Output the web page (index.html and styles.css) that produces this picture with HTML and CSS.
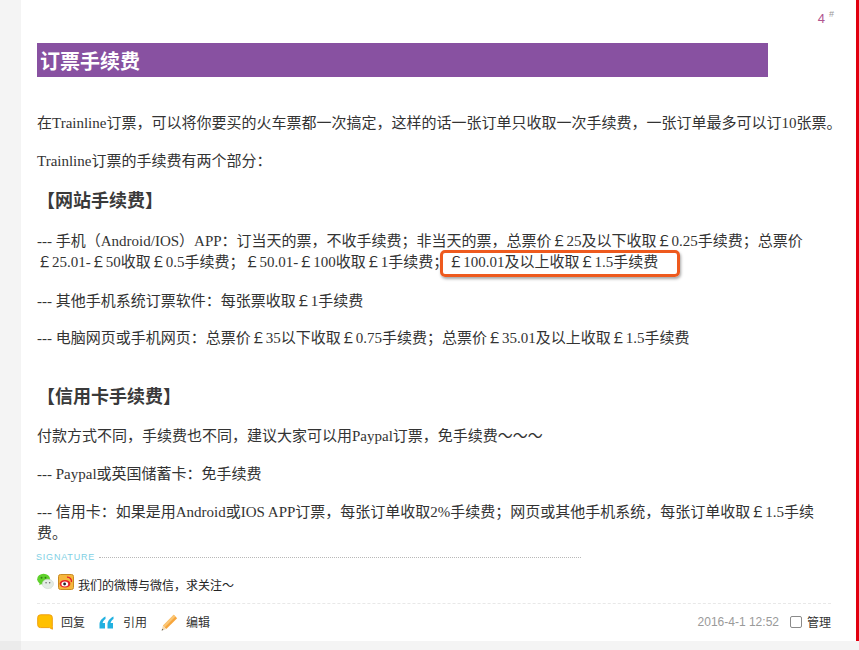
FILE: index.html
```html
<!DOCTYPE html>
<html lang="zh">
<head>
<meta charset="utf-8">
<title>订票手续费</title>
<link rel="stylesheet" href="styles.css">
</head>
<body>
<div class="page">
  <aside class="gutter"></aside>
  <main class="post">
    <div class="floor"><span class="floor-num">4</span><sup class="floor-mark">#</sup></div>
    <h1 class="title">订票手续费</h1>
    <div class="content">
      <p class="p-first">在Trainline订票，可以将你要买的火车票都一次搞定，这样的话一张订单只收取一次手续费，一张订单最多可以订10张票。</p>
      <p class="p-second">Trainline订票的手续费有两个部分：</p>
      <h2 class="section">【网站手续费】</h2>
      <p class="p-mobile">--- 手机（Android/IOS）APP：订当天的票，不收手续费；非当天的票，总票价￡25及以下收取￡0.25手续费；总票价￡25.01-￡50收取￡0.5手续费；￡50.01-￡100收取￡1手续费；￡100.01及以上收取￡1.5手续费<span class="callout"></span></p>
      <p class="p-other">--- 其他手机系统订票软件：每张票收取￡1手续费</p>
      <p class="p-web">--- 电脑网页或手机网页：总票价￡35以下收取￡0.75手续费；总票价￡35.01及以上收取￡1.5手续费</p>
      <h2 class="section section-card">【信用卡手续费】</h2>
      <p class="p-pay">付款方式不同，手续费也不同，建议大家可以用Paypal订票，免手续费～～～</p>
      <p class="p-paypal">--- Paypal或英国储蓄卡：免手续费</p>
      <p class="p-card">--- 信用卡：如果是用Android或IOS APP订票，每张订单收取2%手续费；网页或其他手机系统，每张订单收取￡1.5手续费。</p>
    </div>
    <div class="signature">
      <div class="sig-label"><span class="sig-word">SIGNATURE</span><span class="sig-line"></span></div>
      <div class="sig-text">
        <svg class="ico-wechat" viewBox="0 0 18 18" aria-hidden="true">
          <ellipse cx="7" cy="6.5" rx="6.8" ry="5.8" fill="#5fd12c"/>
          <path d="M3 10l-.6 3 3-1.8z" fill="#5fd12c"/>
          <circle cx="4.8" cy="5" r="1" fill="#2f7d12"/><circle cx="9" cy="5" r="1" fill="#2f7d12"/>
          <ellipse cx="11.5" cy="11.5" rx="6" ry="5" fill="#e4ece6" stroke="#c3d0c6" stroke-width=".5"/>
          <path d="M14.5 15l1 2.4-3-1.4z" fill="#e4ece6"/>
          <circle cx="9.6" cy="10.4" r=".8" fill="#666"/><circle cx="13.4" cy="10.4" r=".8" fill="#666"/>
        </svg>
        <svg class="ico-weibo" viewBox="0 0 16 16" aria-hidden="true">
          <rect x=".5" y=".5" width="15" height="15" rx="2" fill="#f6b73c" stroke="#c98a22"/>
          <ellipse cx="7" cy="9.8" rx="5.4" ry="3.8" fill="#e6212a"/>
          <ellipse cx="6.8" cy="10" rx="3.4" ry="2.5" fill="#fff"/>
          <circle cx="6.6" cy="10" r="1.4" fill="#222"/>
          <path d="M9 3.2a4 4 0 0 1 4.4 4.8" fill="none" stroke="#e6212a" stroke-width="1.4"/>
        </svg>
        <span>我们的微博与微信，求关注～</span>
      </div>
    </div>
    <footer class="actions">
      <a class="action">
        <svg class="ico-reply" viewBox="0 0 16 16" aria-hidden="true">
          <path d="M3.5 .8h9A2.8 2.8 0 0 1 15.3 3.6v8.6l.1 3-3-1.6H3.5A2.8 2.8 0 0 1 .7 10.8V3.6A2.8 2.8 0 0 1 3.5 .8z" fill="#ffc000" stroke="#f0a010"/>
        </svg>
        <span>回复</span>
      </a>
      <a class="action action-quote">
        <svg class="ico-quote" viewBox="0 0 15 13" aria-hidden="true">
          <path d="M6.5 .5C3.5 2 .6 4.8.5 8v4.500h5.500V7H3.600c.2-1.500 1.500-3 2.900-4zM14.500 .5C11.500 2 8.600 4.800 8.500 8v4.500H14V7h-2.400c.2-1.500 1.500-3 2.900-4z" fill="#22b1e0"/>
        </svg>
        <span>引用</span>
      </a>
      <a class="action action-edit">
        <svg class="ico-edit" viewBox="0 0 16 16" aria-hidden="true">
          <path d="M12 .8l3.200 3.200L5 14.200 1.800 11z" fill="#f7a63c"/>
          <path d="M12 .8l1.600 1.600L3.400 12.600 1.800 11z" fill="#fbc675"/>
          <path d="M1.800 11L5 14.200.6 15.500z" fill="#f3d9b0"/>
          <path d="M1.100 13.800L2.300 15 .6 15.500z" fill="#555"/>
        </svg>
        <span>编辑</span>
      </a>
      <time class="date">2016-4-1 12:52</time>
      <label class="manage"><span class="check"></span><span>管理</span></label>
    </footer>
  </main>
  <div class="rail"></div>
</div>
<div class="bottom"><div class="bottom-left"></div></div>
</body>
</html>
```
FILE: styles.css
```css
* { box-sizing: border-box; }
html, body { margin: 0; padding: 0; background: #fff; }
body { height: 650px; overflow: hidden; }
.page { display: flex; height: 641px; }
.gutter { width: 21px; flex: none; background: #f4f4f4; }
.rail { width: 3px; flex: none; background: #e2000f; margin-left: auto; }
.post { flex: 1; min-width: 0; padding: 0 13px 0 16px; display: flex; flex-direction: column; }
.post > * { flex: none; }

.floor { height: 43px; padding: 11px 0 0; text-align: right; font: 12px/16px "Liberation Sans", sans-serif; color: #b0558f; margin-right: 9px; }
.floor-num { font-size: 13px; }
.floor-mark { font-size: 9px; color: #999; margin-left: 4px; vertical-align: 6px; line-height: 0; }

.title { margin: 0; width: 731px; height: 34px; padding: 4px 0 0 3px; background: #8851a1; color: #fff; font: bold 20px/30px "Liberation Serif", "Noto Sans CJK SC", serif; }

.content { width: 806px; color: #333; font: 15px/21px "Liberation Serif", "Noto Sans CJK SC", serif; padding-top: 36px; }
.content p { margin: 0; }
.p-first { margin-bottom: 17px !important; }
.p-second { margin-bottom: 18px !important; }
.section { margin: 0; color: #3a3a3a; font: bold 18px/22px "Liberation Serif", "Noto Sans CJK SC", serif; }
.p-mobile { position: relative; margin-top: 19px !important; margin-bottom: 18px !important; }
.callout { position: absolute; left: 403px; top: 19px; width: 240px; height: 27px; border: 3px solid #ee5a1e; border-radius: 5px; box-shadow: 1px 2px 3px rgba(0,0,0,.35); }
.p-other { margin-bottom: 16px !important; }
.p-web { margin-bottom: 37px !important; }
.section-card { margin-bottom: 18px; }
.p-pay { margin-bottom: 17px !important; }
.p-paypal { margin-bottom: 17px !important; }

.signature { margin-top: 7px; }
.sig-label { display: flex; align-items: center; width: 544px; height: 12px; }
.sig-word { font: 9px/12px "Liberation Sans", sans-serif; letter-spacing: .8px; color: #7fd0e4; margin-left: -1px; }
.sig-line { flex: 1; margin-left: 4px; border-top: 1px dotted #b8b8b8; }
.sig-text { display: flex; align-items: flex-end; height: 24px; margin-top: 5px; font: 12px/15px "Noto Sans CJK SC", sans-serif; color: #222; }
.ico-wechat { width: 17px; height: 17px; margin-bottom: 2px; flex: none; }
.ico-weibo { width: 16px; height: 16px; margin: 0 4px 2px 4px; flex: none; }

.actions { display: flex; align-items: center; height: 37px; margin-top: 11px; width: 794px; border-top: 1px dashed #e8e8e8; font: 12px/16px "Noto Sans CJK SC", sans-serif; color: #333; }
.action { display: flex; align-items: center; }
.action svg { flex: none; }
.ico-reply { width: 16px; height: 16px; margin-right: 8px; }
.action-quote { margin-left: 14px; }
.ico-quote { width: 15px; height: 13px; margin-right: 9px; }
.action-edit { margin-left: 14px; }
.ico-edit { width: 17px; height: 17px; margin-right: 8px; }
.date { margin-left: auto; font: 12px/16px "Liberation Sans", sans-serif; color: #9a9a9a; }
.manage { display: flex; align-items: center; margin-left: 11px; }
.check { width: 12px; height: 12px; margin-right: 5px; border: 1px solid #8a8a8a; border-radius: 2px; background: #fff; }

.bottom { height: 9px; background: #f4f4f4; }
.bottom-left { width: 21px; height: 9px; background: #ebebeb; }
```
